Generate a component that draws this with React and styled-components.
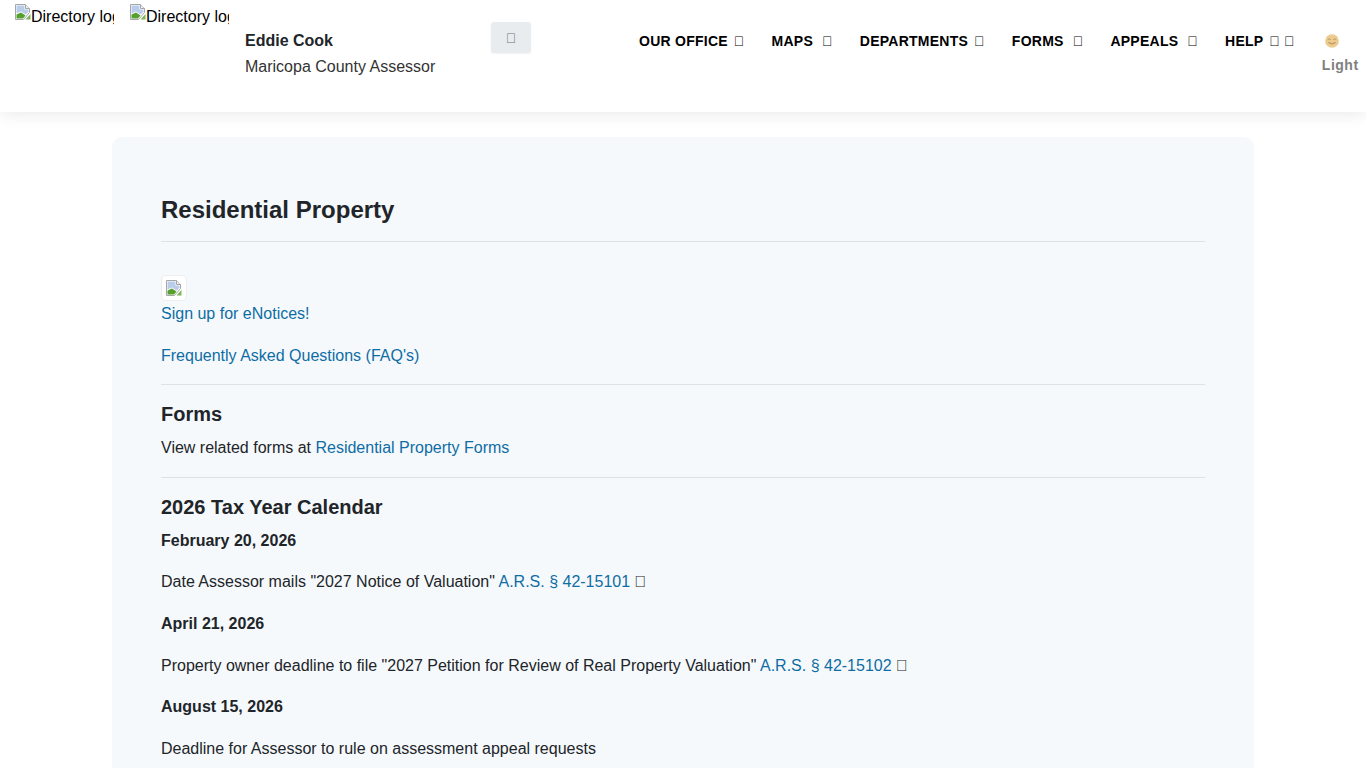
import styled, { createGlobalStyle } from "styled-components";

const Global = createGlobalStyle`
  html, body {
    margin: 0;
    height: 768px;
    overflow: hidden;
    background: #fff;
  }
  body {
    font-family: "Liberation Sans", Arial, sans-serif;
    font-size: 16px;
    line-height: 24px;
    color: #212529;
  }
`;

const Header = styled.header`
  height: 112px;
  background: #fff;
  box-shadow: 0 2px 16px rgba(0, 0, 0, 0.09);
  display: flex;
  position: relative;
`;

const LogoSlot = styled.div`
  flex: none;
  width: 99px;
  height: 40px;
  margin: 4px 1px 0 15px;
  overflow: hidden;
  white-space: nowrap;
  display: flex;
  color: #000;
`;

const LogoAlt = styled.span`
  padding-top: 1px;
`;

const Brand = styled.div`
  flex: none;
  margin: 28px 0 0 15px;
  width: 246px;
`;

const BrandName = styled.div`
  font-weight: 700;
  line-height: 26px;
`;

const BrandRole = styled.div`
  line-height: 26px;
  color: #333;
`;

const SearchButton = styled.button`
  flex: none;
  width: 40px;
  height: 31px;
  margin: 22px 0 0 0;
  padding: 0;
  border: 0;
  border-radius: 3px;
  background: #e9ecef;
  color: #6c757d;
  font: 14px "Liberation Sans", Arial, sans-serif;
  box-shadow: 0 1px 2px rgba(0, 0, 0, 0.05);
`;

const Nav = styled.nav`
  flex: none;
  display: flex;
  margin: 29px 0 0 108px;
  height: 24px;
  gap: 27px;
`;

const NavItem = styled.a`
  font-size: 14px;
  font-weight: 700;
  letter-spacing: 0.25px;
  color: #000;
  white-space: nowrap;
`;

const Tofu = styled.span`
  font-weight: 400;
  margin-left: ${(p) => p.$gap ?? 0}px;
`;

const Theme = styled.div`
  flex: none;
  margin: 34px 0 0 27px;
  display: flex;
  flex-direction: column;
  align-items: flex-start;
`;

const ThemeIcon = styled.div`
  margin: 0 0 5px 3px;
  height: 14px;
  display: flex;
`;

const ThemeLabel = styled.div`
  font-size: 14px;
  font-weight: 700;
  letter-spacing: 0.5px;
  color: #808080;
`;

const Card = styled.main`
  width: 1044px;
  margin: 25px auto 0;
  padding: 56px 49px 0;
  height: 640px;
  background: #f6f9fc;
  border-radius: 10px;
`;

const Title = styled.h1`
  margin: 0;
  font-size: 24px;
  line-height: 34px;
  font-weight: 700;
  color: #212529;
`;

const Rule = styled.hr`
  border: 0;
  border-top: 1px solid #dee2e6;
  margin: ${(p) => p.$top}px 0 ${(p) => p.$bottom}px;
`;

const Thumb = styled.div`
  width: 26px;
  height: 26px;
  margin-bottom: 1px;
  box-sizing: border-box;
  background: #fff;
  border: 1px solid #eee;
  border-radius: 5px;
  display: flex;
  align-items: center;
  justify-content: center;
`;

const Line = styled.p`
  margin: 0 0 ${(p) => p.$bottom ?? 18}px;
  line-height: 24px;
  font-weight: ${(p) => (p.$bold ? 700 : 400)};
`;

const LinkText = styled.a`
  color: #0e6da4;
`;

const Section = styled.h2`
  margin: 0 0 8px;
  padding-top: 15px;
  font-size: 20px;
  line-height: 28px;
  font-weight: 700;
`;

const BrokenImage = () => (
  <svg width="16" height="16" viewBox="0 0 16 16" style={{ flexShrink: 0 }}>
    <path d="M0.5 0.5H10.5L14.5 4.5V8.5L8.5 15.5H0.5Z" fill="#fff" stroke="#a6a6a6" />
    <path d="M10.5 0.5V4.5H14.5" fill="#eee" stroke="#a6a6a6" />
    <path d="M1.5 1.5H9.5V5.5H13.5V8L10.5 10.5L6 7.5L1.5 9.5Z" fill="#b9cdea" />
    <path d="M1.5 14.5V10.5L6 8.5L10.5 11.5L8 14.5Z" fill="#56a02e" />
    <path d="M10.5 15.5L15.5 10V15.5Z" fill="#7db55a" />
  </svg>
);

const SunIcon = () => (
  <svg width="14" height="14" viewBox="0 0 14 14">
    <circle cx="7" cy="7" r="6.8" fill="#edca8e" />
    <path d="M2.8 5.6q1.5-1.4 3 0M8.2 5.6q1.5-1.4 3 0" fill="none" stroke="#b99a62" />
    <path d="M3.5 8.2q3.5 3.2 7 0" fill="none" stroke="#b99a62" strokeWidth="1.2" />
  </svg>
);

const navItems = [
  { label: "OUR OFFICE", glyphs: 1, gap: 6 },
  { label: "MAPS", glyphs: 1, gap: 9 },
  { label: "DEPARTMENTS", glyphs: 1, gap: 6 },
  { label: "FORMS", glyphs: 1, gap: 9 },
  { label: "APPEALS", glyphs: 1, gap: 9 },
  { label: "HELP", glyphs: 2, gap: 6 },
];

const App = () => (
  <>
    <Global />
    <Header>
      <LogoSlot>
        <BrokenImage />
        <LogoAlt>Directory logo</LogoAlt>
      </LogoSlot>
      <LogoSlot>
        <BrokenImage />
        <LogoAlt>Directory logo</LogoAlt>
      </LogoSlot>
      <Brand>
        <BrandName>Eddie Cook</BrandName>
        <BrandRole>Maricopa County Assessor</BrandRole>
      </Brand>
      <SearchButton>{"\uf002"}</SearchButton>
      <Nav>
        {navItems.map((item) => (
          <NavItem key={item.label}>
            {item.label}
            <Tofu $gap={item.gap}>{"\uf107"}</Tofu>
            {item.glyphs > 1 && <Tofu $gap={4}>{"\uf107"}</Tofu>}
          </NavItem>
        ))}
      </Nav>
      <Theme>
        <ThemeIcon>
          <SunIcon />
        </ThemeIcon>
        <ThemeLabel>Light</ThemeLabel>
      </Theme>
    </Header>
    <Card>
      <Title>Residential Property</Title>
      <Rule $top={14} $bottom={33} />
      <Thumb>
        <BrokenImage />
      </Thumb>
      <Line>
        <LinkText>Sign up for eNotices!</LinkText>
      </Line>
      <Line $bottom={16}>
        <LinkText>Frequently Asked Questions (FAQ's)</LinkText>
      </Line>
      <Rule $top={0} $bottom={0} />
      <Section>Forms</Section>
      <Line $bottom={17}>
        View related forms at <LinkText>Residential Property Forms</LinkText>
      </Line>
      <Rule $top={0} $bottom={0} />
      <Section>2026 Tax Year Calendar</Section>
      <Line $bold $bottom={17}>February 20, 2026</Line>
      <Line>
        Date Assessor mails "2027 Notice of Valuation" <LinkText>A.R.S. § 42-15101</LinkText> <Tofu>{"\uf08e"}</Tofu>
      </Line>
      <Line $bold>April 21, 2026</Line>
      <Line $bottom={17}>
        Property owner deadline to file "2027 Petition for Review of Real Property Valuation" <LinkText>A.R.S. § 42-15102</LinkText> <Tofu>{"\uf08e"}</Tofu>
      </Line>
      <Line $bold>August 15, 2026</Line>
      <Line>Deadline for Assessor to rule on assessment appeal requests</Line>
    </Card>
  </>
);

export default App;
